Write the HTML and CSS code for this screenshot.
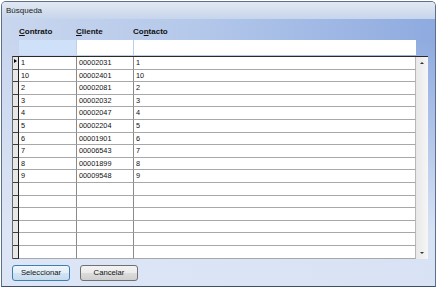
FILE: index.html
```html
<!DOCTYPE html>
<html lang="es">
<head>
    <meta charset="UTF-8">
    <title>Búsqueda</title>
    <link rel="stylesheet" href="styles.css">
</head>
<body>
    <div class="window">
        <div class="titlebar">Búsqueda</div>
        <div class="client">
            <div class="labels">
                <span class="lbl c1"><u>C</u>ontrato</span>
                <span class="lbl c2"><u>C</u>liente</span>
                <span class="lbl c3">Co<u>n</u>tacto</span>
            </div>
            <div class="filters">
                <div class="filter f1 active"></div>
                <div class="filter f2"></div>
                <div class="filter f3"></div>
            </div>
            <div class="grid-wrap">
                <div class="rows">
                    <div class="row"><div class="hdr current"></div><div class="cell">1</div><div class="cell">00002031</div><div class="cell last">1</div></div>
                    <div class="row"><div class="hdr"></div><div class="cell">10</div><div class="cell">00002401</div><div class="cell last">10</div></div>
                    <div class="row"><div class="hdr"></div><div class="cell">2</div><div class="cell">00002081</div><div class="cell last">2</div></div>
                    <div class="row"><div class="hdr"></div><div class="cell">3</div><div class="cell">00002032</div><div class="cell last">3</div></div>
                    <div class="row"><div class="hdr"></div><div class="cell">4</div><div class="cell">00002047</div><div class="cell last">4</div></div>
                    <div class="row"><div class="hdr"></div><div class="cell">5</div><div class="cell">00002204</div><div class="cell last">5</div></div>
                    <div class="row"><div class="hdr"></div><div class="cell">6</div><div class="cell">00001901</div><div class="cell last">6</div></div>
                    <div class="row"><div class="hdr"></div><div class="cell">7</div><div class="cell">00006543</div><div class="cell last">7</div></div>
                    <div class="row"><div class="hdr"></div><div class="cell">8</div><div class="cell">00001899</div><div class="cell last">8</div></div>
                    <div class="row"><div class="hdr"></div><div class="cell">9</div><div class="cell">00009548</div><div class="cell last">9</div></div>
                    <div class="row"><div class="hdr"></div><div class="cell"></div><div class="cell"></div><div class="cell last"></div></div>
                    <div class="row"><div class="hdr"></div><div class="cell"></div><div class="cell"></div><div class="cell last"></div></div>
                    <div class="row"><div class="hdr"></div><div class="cell"></div><div class="cell"></div><div class="cell last"></div></div>
                    <div class="row"><div class="hdr"></div><div class="cell"></div><div class="cell"></div><div class="cell last"></div></div>
                    <div class="row"><div class="hdr"></div><div class="cell"></div><div class="cell"></div><div class="cell last"></div></div>
                    <div class="row"><div class="hdr"></div><div class="cell"></div><div class="cell"></div><div class="cell last"></div></div>
                </div>
                <div class="vscroll">
                    <span class="arrow up"></span>
                    <span class="arrow down"></span>
                </div>
            </div>
            <div class="buttons">
                <button class="btn default">Seleccionar</button>
                <button class="btn">Cancelar</button>
            </div>
        </div>
    </div>
</body>
</html>
```

FILE: styles.css
```css
body {
    margin: 0;
    background: #fff;
    font-family: "Liberation Sans", Arial, sans-serif;
    color: #111;
}

.window {
    margin: 1px 0 0 1px;
    width: 435px;
    box-sizing: border-box;
    border: 1px solid #5d6f8a;
    border-bottom-color: #3e4e66;
    border-radius: 5px 5px 0 0;
    overflow: hidden;
}

.titlebar {
    height: 17px;
    line-height: 17px;
    padding-left: 4px;
    font-size: 8px;
    color: #1c1c1c;
    background: linear-gradient(#e2e9f3, #c6d5eb);
}

.client {
    padding: 6px 0 5px 10px;
    background:
        linear-gradient(to bottom, rgba(222, 231, 246, 0) 8%, rgba(222, 231, 246, 0.92) 80%),
        linear-gradient(to right, #c9d6ee 0%, #b4c8ea 45%, #8eaadf 100%);
}

.labels {
    display: flex;
    height: 14px;
    line-height: 14px;
    padding-left: 7px;
    font-size: 8px;
    font-weight: bold;
    color: #101010;
}

.lbl.c1 { width: 57px; }
.lbl.c2 { width: 57px; }

.filters {
    display: flex;
    gap: 1px;
    height: 15px;
    margin-top: 1px;
    padding-left: 7px;
}

.filter {
    background: #fff;
}

.filter.f1 { width: 57px; }
.filter.f2 { width: 56px; }
.filter.f3 { width: 282px; }

.filter.active {
    background: #cfe1f8;
}

.grid-wrap {
    display: flex;
    width: 416px;
    box-sizing: border-box;
    margin-top: 1px;
    border-top: 1px solid #2a2a2a;
    border-left: 1px solid #6a6a6a;
}

.rows {
    width: 403px;
    background: #fff;
}

.row {
    display: grid;
    grid-template-columns: 6px 58px 57px 1fr;
    height: 12.6px;
}

.hdr {
    position: relative;
    background: #e7e7e7;
    border-right: 1px solid #1c1c1c;
    border-bottom: 1px solid #3c3c3c;
}

.hdr.current::after {
    content: "";
    position: absolute;
    left: 1px;
    top: 2px;
    border-top: 2.5px solid transparent;
    border-bottom: 2.5px solid transparent;
    border-left: 3px solid #000;
}

.cell {
    padding-left: 2px;
    font-size: 7.3px;
    line-height: 11.6px;
    border-right: 1px solid #8a8a8a;
    border-bottom: 1px solid #a8a8a8;
    overflow: hidden;
}

.cell.last {
    border-right-color: #b8b8b8;
}

.vscroll {
    width: 12px;
    display: flex;
    flex-direction: column;
    justify-content: space-between;
    align-items: center;
    padding: 5px 0 5px;
    background: linear-gradient(to right, #e8e8e8, #f6f6f6);
}

.arrow {
    width: 0;
    height: 0;
    border-left: 2px solid transparent;
    border-right: 2px solid transparent;
}

.arrow.up {
    border-bottom: 2px solid #333;
}

.arrow.down {
    border-top: 2px solid #333;
}

.buttons {
    display: flex;
    gap: 10px;
    margin-top: 6px;
}

.btn {
    width: 58px;
    height: 16px;
    padding: 0;
    font-family: "Liberation Sans", Arial, sans-serif;
    font-size: 7.7px;
    color: #111;
    border: 1px solid #707070;
    border-radius: 3px;
    background: linear-gradient(#f3f3f3 0%, #ebebeb 50%, #dcdcdc 51%, #cfcfcf 100%);
}

.btn.default {
    border-color: #3c7fb1;
    background: linear-gradient(#eef5fb 0%, #e3eef8 50%, #d3e3f2 51%, #c7dbee 100%);
}
```
